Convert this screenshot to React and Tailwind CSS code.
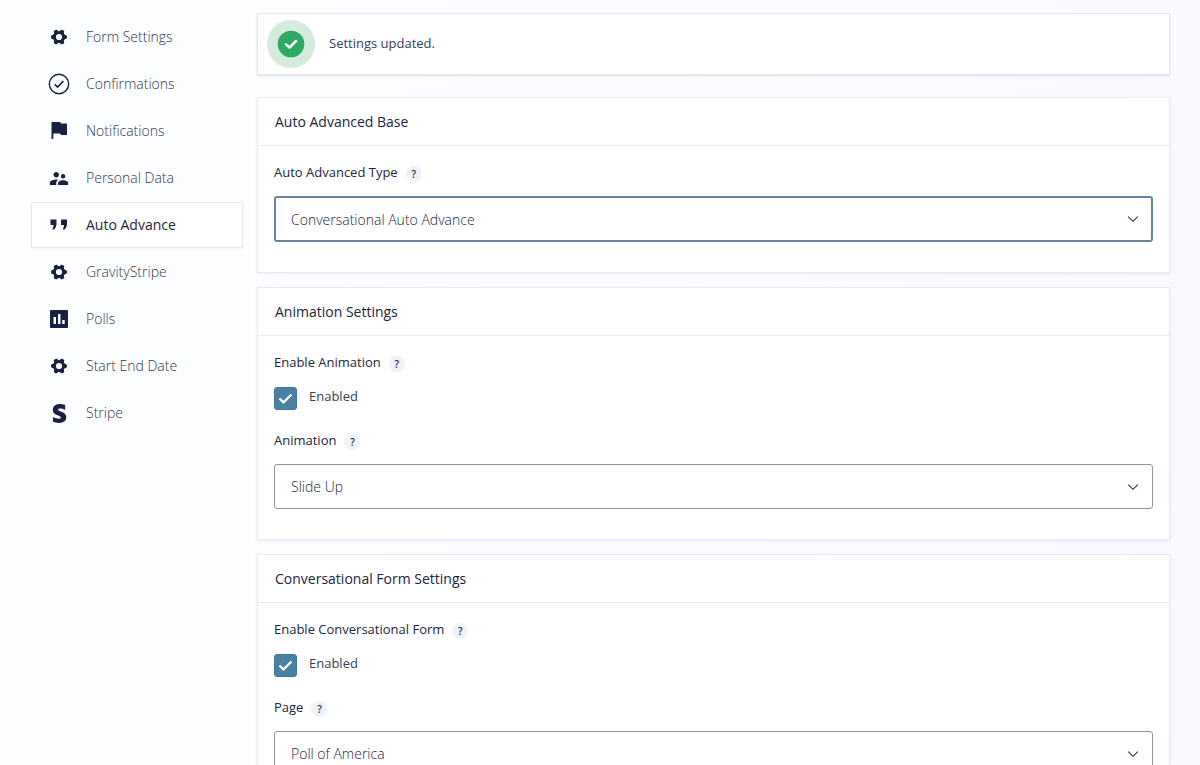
import React, { useState } from "react";
import { MdSupervisorAccount } from "react-icons/md";
import { FaStripeS } from "react-icons/fa";

function Gear() {
  return (
    <svg width="18" height="18" viewBox="-9 -9 18 18" aria-hidden="true">
      <circle r="4.6" fill="none" stroke="currentColor" strokeWidth="3" />
      {[0, 60, 120, 180, 240, 300].map((a) => (
        <path key={a} d="M5 -2.5 L7.400 -1.800 Q8.900 0 7.400 1.800 L5 2.500Z" fill="currentColor" transform={`rotate(${a})`} />
      ))}
    </svg>
  );
}

function CircleCheck() {
  return (
    <svg width="22" height="22" viewBox="0 0 22 22" fill="none" stroke="currentColor" aria-hidden="true">
      <circle cx="11" cy="11" r="9.7" strokeWidth="1.4" />
      <path d="M6.8 11.4l2.8 2.6 5.8-6" strokeWidth="1.7" />
    </svg>
  );
}

function Flag() {
  return (
    <svg width="16" height="18" viewBox="0 0 16 18" fill="currentColor" aria-hidden="true">
      <path d="M.5 0H9.300L9.800 1.500H16V13H9.800L9.300 11.500H2.300V17H.5z" />
    </svg>
  );
}

function Quote() {
  return (
    <svg width="18" height="12" viewBox="0 0 18 12" fill="currentColor" aria-hidden="true">
      <path d="M0.500 0.500h6v5q-.3 3.300-2.300 5H2.200q1.300-1.800 1.300-4.500H.5z" />
      <path d="M11 0.500h6v5q-.3 3.300-2.300 5h-2q1.300-1.800 1.300-4.500H11z" />
    </svg>
  );
}

function Poll() {
  return (
    <svg width="18" height="18" viewBox="0 0 18 18" aria-hidden="true">
      <rect width="18" height="18" rx="1" fill="currentColor" />
      <path d="M3.500 7h2.500v7H3.500zM8 4h2.500v10H8zM12.300 10h2.400v4h-2.400z" fill="#fff" />
    </svg>
  );
}

const items = [
  ["Form Settings", <Gear />],
  ["Confirmations", <CircleCheck />],
  ["Notifications", <Flag />],
  ["Personal Data", <MdSupervisorAccount size={23} />],
  ["Auto Advance", <Quote />],
  ["GravityStripe", <Gear />],
  ["Polls", <Poll />],
  ["Start End Date", <Gear />],
  ["Stripe", <FaStripeS size={19} />],
];

function Card({ title, children }) {
  return (
    <section className="border border-[#e8ebf2] bg-white shadow-[0_1px_3px_rgba(30,50,100,0.09)]">
      <h2 className="flex h-12 items-center border-b border-[#e8ebf2] px-[17px] text-sm font-medium text-[#1b2540]">
        {title}
      </h2>
      <div className="px-4 pt-4 pb-[30px]">{children}</div>
    </section>
  );
}

function Label({ htmlFor, children }) {
  return (
    <div className="flex h-5 items-end gap-2">
      <label htmlFor={htmlFor} className="text-[13px] leading-5 font-medium text-[#1b2540]">
        {children}
      </label>
      <button
        type="button"
        aria-label={`Help: ${children}`}
        className="flex size-4 items-center justify-center rounded-full bg-[#eff2f8] text-[10px] leading-4 font-semibold text-[#242f4c]"
      >
        ?
      </button>
    </div>
  );
}

function Select({ id, options, active }) {
  const look = active
    ? "h-[46px] border-2 border-[#6485a3] px-[15px]"
    : "h-[45px] border border-[#8f95a2] px-4";
  return (
    <div className="relative mt-[14px]">
      <select
        id={id}
        className={`block w-full appearance-none rounded-[3px] bg-white text-[14px] font-light text-[#1b2540] outline-none ${look}`}
      >
        {options.map((o) => (
          <option key={o}>{o}</option>
        ))}
      </select>
      <svg
        className="pointer-events-none absolute inset-y-0 right-[14px] my-auto text-[#27304d]"
        width="12"
        height="8"
        viewBox="0 0 12 8"
        fill="none"
        stroke="currentColor"
        strokeWidth="1.1"
        aria-hidden="true"
      >
        <path d="M1.200 1.700L6 6.300l4.800-4.600" />
      </svg>
    </div>
  );
}

function Enabled({ id }) {
  const [on, setOn] = useState(true);
  return (
    <div className="mt-[15px] mb-5 flex items-start gap-3">
      <span className="relative flex size-[23px]">
        <input
          id={id}
          type="checkbox"
          checked={on}
          onChange={() => setOn(!on)}
          className="size-full appearance-none rounded-[3px] border border-[#3f7797] bg-white checked:bg-[#4a81a2]"
        />
        {on && (
          <svg className="pointer-events-none absolute inset-0 m-auto" width="15" height="12" viewBox="0 0 15 12" fill="none" stroke="#fff" strokeWidth="2.300" aria-hidden="true">
            <path d="M1.500 5.500l4 3.800 8-7.800" />
          </svg>
        )}
      </span>
      <label htmlFor={id} className="text-[13px] leading-[18px] text-[#35405c]">
        Enabled
      </label>
    </div>
  );
}

export default function App() {
  return (
    <div className="flex h-screen overflow-hidden bg-[linear-gradient(90deg,#fdfeff,#f9faff)] pr-[30px] pl-[31px] font-['Open_Sans','Noto_Sans',sans-serif]">
      <nav className="flex w-[212px] shrink-0 flex-col gap-px pt-[14px]">
        {items.map(([name, icon]) => {
          const active = name === "Auto Advance";
          return (
            <a
              key={name}
              href="#"
              aria-current={active ? "page" : undefined}
              className={`flex h-[46px] shrink-0 items-center gap-4 border pl-4 text-sm ${
                active
                  ? "border-[#e6e9f1] bg-white font-medium text-[#1b2540] shadow-[0_1px_2px_rgba(30,50,100,0.06)]"
                  : "border-transparent font-light text-[#2f384e]"
              }`}
            >
              <span className="flex w-[22px] justify-center text-[#18213f]">{icon}</span>
              {name}
            </a>
          );
        })}
      </nav>
      <main className="ml-[14px] flex min-w-0 flex-1 flex-col pt-[13px]">
        <div role="status" className="flex h-[62px] shrink-0 items-center gap-[14px] border border-[#e2e6ee] bg-white pl-[9px] text-[13px] text-[#35405c] shadow-[0_1px_2px_rgba(30,50,100,0.14)]">
          <span className="flex size-[48px] items-center justify-center rounded-full bg-[#d5ebdd]">
            <svg width="28" height="28" viewBox="0 0 28 28" aria-hidden="true">
              <circle cx="14" cy="14" r="13.300" fill="#2faa63" />
              <path d="M9 14.300l3.500 3.200 6.500-6.500" fill="none" stroke="#fff" strokeWidth="2.500" strokeLinecap="round" strokeLinejoin="round" />
            </svg>
          </span>
          Settings updated.
        </div>
        <div className="mt-[22px] flex flex-col gap-[14px]">
          <Card title="Auto Advanced Base">
            <Label htmlFor="type">Auto Advanced Type</Label>
            <Select id="type" active options={["Conversational Auto Advance"]} />
          </Card>
          <Card title="Animation Settings">
            <Label htmlFor="enable-animation">Enable Animation</Label>
            <Enabled id="enable-animation" />
            <Label htmlFor="animation">Animation</Label>
            <Select id="animation" options={["Slide Up"]} />
          </Card>
          <Card title="Conversational Form Settings">
            <Label htmlFor="enable-form">Enable Conversational Form</Label>
            <Enabled id="enable-form" />
            <Label htmlFor="page">Page</Label>
            <Select id="page" options={["Poll of America"]} />
          </Card>
        </div>
      </main>
    </div>
  );
}
